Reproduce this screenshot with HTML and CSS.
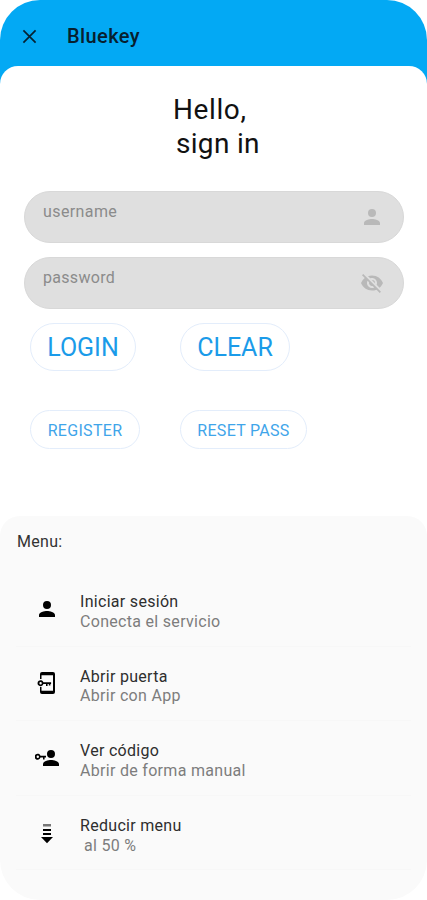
FILE: index.html
```html
<!DOCTYPE html>
<html lang="es">
<head>
<meta charset="utf-8">
<title>Bluekey</title>
<link rel="stylesheet" href="styles.css">
</head>
<body>
<div class="phone">
  <header class="bar">
    <svg class="close" viewBox="0 0 16 16"><path d="M1.5 1.5l13 13M14.5 1.5l-13 13"/></svg>
    <span class="brand">Bluekey</span>
  </header>
  <main class="sheet">
    <h1 class="hello"><span class="hi">Hello,</span><br><span class="sign">sign in</span></h1>
    <div class="field"><span class="user">username</span>
      <svg viewBox="0 0 24 24"><path d="M12 12a4 4 0 1 0 0-8 4 4 0 0 0 0 8zm0 2c-2.67 0-8 1.34-8 4v2h16v-2c0-2.66-5.33-4-8-4z"/></svg>
    </div>
    <div class="field"><span class="pass">password</span>
      <svg viewBox="0 0 24 24"><path d="M12 7c2.76 0 5 2.24 5 5 0 .65-.13 1.26-.36 1.83l2.92 2.92c1.51-1.26 2.7-2.89 3.43-4.75-1.73-4.39-6-7.5-11-7.5-1.4 0-2.74.25-3.98.7l2.16 2.16C10.74 7.13 11.35 7 12 7zM2 4.27l2.28 2.28.46.46A11.8 11.8 0 0 0 1 12c1.73 4.39 6 7.5 11 7.5 1.55 0 3.03-.3 4.38-.84l.42.42L19.73 22 21 20.73 3.27 3 2 4.27zM7.53 9.8l1.55 1.55A3 3 0 0 0 12.65 14.92l1.55 1.55A5 5 0 0 1 7.53 9.8zm4.31-.78l3.15 3.15.02-.16a3 3 0 0 0-3-3l-.17.01z"/></svg>
    </div>
    <div class="actions">
      <button class="big login">LOGIN</button><button class="big clear">CLEAR</button>
      <button class="small register">REGISTER</button><button class="small reset">RESET PASS</button>
    </div>
  </main>
  <section class="menu">
    <h2>Menu:</h2>
    <ul>
      <li><svg viewBox="0 0 24 24"><path d="M12 12a4 4 0 1 0 0-8 4 4 0 0 0 0 8zm0 2c-2.67 0-8 1.34-8 4v2h16v-2c0-2.66-5.33-4-8-4z"/></svg>
        <p><span>Iniciar sesión</span><small>Conecta el servicio</small></p></li>
      <li><svg viewBox="0 0 24 24"><path d="M5 8V3q0-2 2-2h11q2 0 2 2v18q0 2-2 2H7q-2 0-2-2v-5h1.5v3.8H18V4.2H6.5V8z"/><path d="M8.4 11.3A3 3 0 1 0 8.4 13H11v2h1.6v-2h1.2v1.6h1.6V13h.7v-1.7zM5.6 11a1.2 1.2 0 1 1 0 2.4 1.2 1.2 0 0 1 0-2.4z"/></svg>
        <p><span>Abrir puerta</span><small>Abrir con App</small></p></li>
      <li><svg class="wide" viewBox="0 0 24 24"><path d="M16 12a4 4 0 1 0 0-8 4 4 0 0 0 0 8zm0 2c-2.67 0-8 1.34-8 4v2h16v-2c0-2.66-5.33-4-8-4z"/><path d="M5.5 9.8A3 3 0 1 0 5.5 11.6H8v2h1.6v-2H11V9.8zM2.8 9.5a1.2 1.2 0 1 1 0 2.4 1.2 1.2 0 0 1 0-2.4z"/></svg>
        <p><span>Ver código</span><small>Abrir de forma manual</small></p></li>
      <li><svg viewBox="0 0 24 24"><path class="faded" d="M8 3h8v2.5H8z"/><path d="M8 8h8v2H8zM8 12h8v2H8zM6 16h12l-6 6.3z"/></svg>
        <p><span>Reducir menu</span><small class="indent">al 50 %</small></p></li>
    </ul>
  </section>
</div>
</body>
</html>
```
FILE: styles.css
```css
* { box-sizing: border-box; }
body { margin: 0; background: #fff; font-family: Roboto, sans-serif; color: #111; }
.phone { width: 427px; height: 900px; display: flex; flex-direction: column; background: #fff; }
.bar { height: 86px; flex: none; display: flex; align-items: center; padding: 6px 0 20px 22px; background: #03a9f4; border-radius: 40px 40px 0 0; }
.close { width: 15px; height: 15px; fill: none; stroke: #052233; stroke-width: 1.8; }
.brand { margin-left: 30px; font-size: 20px; font-weight: 500; letter-spacing: .4px; color: #07202e; }
.sheet { flex: 1; margin-top: -20px; background: #fff; border-radius: 18px 18px 0 0; padding: 27px 23px 0 24px; }
.hello { margin: 0 0 30px 152px; font-size: 28px; line-height: 34px; font-weight: 400; letter-spacing: .3px; }
.hi { margin-left: -3px; letter-spacing: .6px; }
.field { height: 52px; margin-bottom: 14px; border-radius: 26px; border: 1px solid #d8d8d8; background: #dfdfdf; display: flex; justify-content: space-between; padding: 0 19px 0 18px; color: #8b8b8b; font-size: 16px; line-height: 39px; }
.user { letter-spacing: .4px; }
.pass { letter-spacing: .3px; }
.field svg { width: 24px; height: 24px; margin-top: 13px; fill: #b9b9b9; }
.actions { display: grid; grid-template-columns: 150px auto; grid-template-rows: 48px 39px; row-gap: 39px; padding-left: 6px; justify-items: start; }
button { font-family: inherit; font-weight: 400; height: 100%; background: #fff; border: 1px solid #e3edfb; border-radius: 24px; color: #1b9be9; padding: 0; text-align: center; }
.big { font-size: 25px; }
.small { font-size: 16px; letter-spacing: .3px; color: #3fa5ea; padding-top: 1px; }
.login { width: 106px; }
.clear { width: 110px; }
.register { width: 110px; }
.reset { width: 127px; }
.menu { height: 384px; flex: none; background: #fafafa; border-radius: 20px 20px 40px 40px; letter-spacing: .3px; }
.menu h2 { margin: 0; padding: 16px 0 0 17px; font-size: 16px; line-height: 20px; font-weight: 400; color: #333; height: 56px; }
.menu ul { margin: 0; padding: 0 16px; list-style: none; }
.menu li { height: 74.6px; border-bottom: 1px solid #f7f7f7; display: flex; align-items: center; }
.menu li svg { width: 24px; height: 24px; margin-left: 19px; }
.menu p { margin: 6px 0 0 21px; font-size: 16px; line-height: 19.5px; color: #2e2e2e; }
.menu p span, .menu small { display: block; font-size: 16px; white-space: nowrap; }
.menu small { color: #7d7d7d; }
.faded { fill: #777; }
.menu .indent { padding-left: 4px; }
```
